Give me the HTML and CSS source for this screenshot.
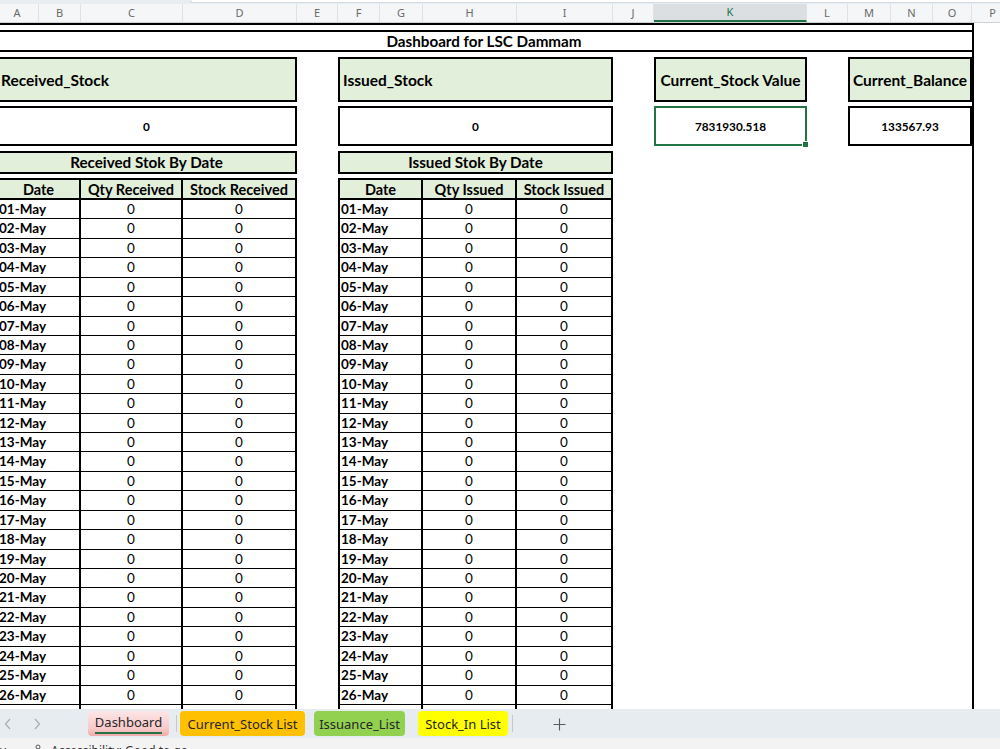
FILE: index.html
```html
<!DOCTYPE html>
<html lang="en">

<head>
  <meta charset="UTF-8">
  <title>Dashboard for LSC Dammam</title>
  <link rel="stylesheet" href="styles.css">
</head>

<body>
  <div class="app">
    <div class="formula-strip">
      <div class="formula-box"></div>
    </div>

    <div class="col-heads">
      <span>A</span><span>B</span><span>C</span><span>D</span><span>E</span>
      <span>F</span><span>G</span><span>H</span><span>I</span><span>J</span>
      <span class="sel">K</span><span>L</span><span>M</span><span>N</span><span>O</span>
      <span>P</span>
    </div>

    <div class="sheet-wrap">
      <div class="sheet">
        <div class="band">
          <div class="title">Dashboard for LSC Dammam</div>
        </div>

        <div class="band band-cards">
          <div class="card left col-recv">Received_Stock</div>
          <div class="card left col-issued">Issued_Stock</div>
          <div class="card center col-k">Current_Stock Value</div>
          <div class="card center col-bal">Current_Balance</div>
        </div>

        <div class="band band-values">
          <div class="value col-recv">0</div>
          <div class="value col-issued">0</div>
          <div class="value sel col-k">7831930.518</div>
          <div class="value col-bal">133567.93</div>
        </div>

        <div class="band band-sub">
          <div class="subhead col-recv">Received Stok By Date</div>
          <div class="subhead col-issued">Issued Stok By Date</div>
        </div>

        <div class="band band-tables">
          <div class="tbl tbl-recv col-recv" id="recvTable">
            <div class="th">Date</div>
            <div class="th">Qty Received</div>
            <div class="th">Stock Received</div>
          </div>
          <div class="tbl tbl-issued col-issued" id="issuedTable">
            <div class="th">Date</div>
            <div class="th">Qty Issued</div>
            <div class="th">Stock Issued</div>
          </div>
        </div>
      </div>
    </div>

    <div class="tabbar">
      <div class="tab-nav">
        <svg width="8" height="12" viewBox="0 0 8 12"><polyline points="6,1 1.5,6 6,11" fill="none" stroke="#a8adb1" stroke-width="1.2"/></svg>
        <svg width="8" height="12" viewBox="0 0 8 12"><polyline points="2,1 6.5,6 2,11" fill="none" stroke="#a8adb1" stroke-width="1.2"/></svg>
      </div>
      <div class="tab tab-active"><span>Dashboard</span></div>
      <div class="tab-sep"></div>
      <div class="tab tab-orange">Current_Stock List</div>
      <div class="tab tab-green">Issuance_List</div>
      <div class="tab tab-yellow">Stock_In List</div>
      <div class="tab-sep sep-end"></div>
      <div class="tab-add">
        <svg width="13" height="13" viewBox="0 0 13 13"><path d="M6.5 0.5v12M0.5 6.5h12" stroke="#5a5a5a" stroke-width="1.1"/></svg>
      </div>
    </div>

    <div class="statusbar">
      <span class="status-ready">ady</span>
      <svg class="status-icon" width="12" height="12" viewBox="0 0 12 12"><circle cx="6" cy="3" r="2" fill="none" stroke="#555" stroke-width="1"/><path d="M1 6h10M6 5v7" stroke="#555" stroke-width="1"/></svg>
      <span>Accessibility: Good to go</span>
    </div>
  </div>

  <script>
    // 26 visible days, then the top edge of the next row under the tab bar
    function fillRows(id) {
      const table = document.getElementById(id);
      for (let d = 1; d <= 26; d++) {
        const label = (d < 10 ? '0' + d : d) + '-May';
        table.insertAdjacentHTML('beforeend',
          '<div class="td date">' + label + '</div>' +
          '<div class="td num">0</div>' +
          '<div class="td num">0</div>');
      }
      table.insertAdjacentHTML('beforeend',
        '<div class="td"></div><div class="td"></div><div class="td"></div>');
    }
    fillRows('recvTable');
    fillRows('issuedTable');
  </script>
</body>

</html>
```

FILE: styles.css
```css
* {
  margin: 0;
  padding: 0;
  box-sizing: border-box;
}

:root {
  --cols: 43px 42px 102px 114px 41px 42px 43px 94px 96px 41px 153px 41px 43px 42px 39px;
  --green-fill: #e2efda;
  --excel-green: #217346;
}

html,
body {
  width: 1000px;
  height: 749px;
  overflow: hidden;
  background: #fff;
}

body {
  font-family: Lato, "Open Sans", sans-serif;
  color: #000;
}

.app {
  display: flex;
  flex-direction: column;
  height: 749px;
}

/* formula bar remnant */
.formula-strip {
  height: 4px;
  background: #e8edf1;
  padding-left: 190px;
}

.formula-box {
  height: 3px;
  background: #fff;
  border: 1px solid #d6dbdf;
  border-top: none;
  border-right: none;
  border-bottom-left-radius: 4px;
}

/* column letters */
.col-heads {
  display: grid;
  grid-template-columns: var(--cols) 42px;
  height: 19px;
  margin-left: -4px;
  background: #f4f6f8;
  border-bottom: 1px solid #cfd3d6;
  font-family: "Noto Sans", sans-serif;
  font-size: 11px;
  color: #6a6a6a;
}

.col-heads span {
  text-align: center;
  line-height: 18px;
  border-right: 1px solid #dfe2e5;
}

.col-heads .sel {
  background: #dcdfe2;
  color: #1e7145;
  border-bottom: 2px solid #1e7145;
  line-height: 16px;
}

/* sheet */
.sheet-wrap {
  flex: 1;
  overflow: hidden;
}

.sheet {
  width: 978px;
  height: 100%;
  margin-left: -4px;
  padding-top: 5px;
  border-top: 2px solid #000;
  border-right: 2px solid #000;
}

.band {
  display: grid;
  grid-template-columns: var(--cols);
}

.col-recv {
  grid-column: 1 / 5;
}

.col-issued {
  grid-column: 6 / 10;
}

.col-k {
  grid-column: 11 / 12;
}

.col-bal {
  grid-column: 13 / 16;
}

.title {
  grid-column: 1 / -1;
  height: 22px;
  border-top: 2px solid #000;
  border-bottom: 2px solid #000;
  text-align: center;
  font-weight: 700;
  font-size: 15.2px;
  line-height: 18px;
}

.band-cards {
  margin-top: 5px;
}

.card {
  height: 45px;
  border: 2px solid #000;
  background: var(--green-fill);
  font-weight: 700;
  font-size: 15.5px;
  display: flex;
  align-items: center;
}

.card.left {
  padding-left: 3px;
}

.card.center {
  justify-content: center;
}

.band-values {
  margin-top: 4px;
}

.value {
  position: relative;
  height: 40px;
  border: 2px solid #000;
  display: flex;
  align-items: center;
  justify-content: center;
  font-weight: 700;
  font-size: 11.8px;
}

.value.sel {
  border-color: var(--excel-green);
}

.value.sel::after {
  content: "";
  position: absolute;
  right: -4px;
  bottom: -4px;
  width: 5px;
  height: 5px;
  background: var(--excel-green);
  border: 1px solid #fff;
}

.band-sub {
  margin-top: 5px;
}

.subhead {
  height: 23px;
  border: 2px solid #000;
  background: var(--green-fill);
  text-align: center;
  font-weight: 700;
  font-size: 15.2px;
  line-height: 19px;
}

.band-tables {
  margin-top: 4px;
  align-items: start;
}

.tbl {
  display: grid;
  border-top: 2px solid #000;
  border-left: 2px solid #000;
}

.tbl-recv {
  grid-template-columns: 83px 102px 114px;
}

.tbl-issued {
  grid-template-columns: 83px 94px 96px;
}

.th {
  height: 20px;
  background: var(--green-fill);
  border-right: 2px solid #000;
  border-bottom: 2px solid #000;
  text-align: center;
  font-weight: 700;
  font-size: 14.5px;
  line-height: 19px;
}

.td {
  height: 19.43px;
  border-right: 2px solid #000;
  border-bottom: 1px solid #000;
  font-size: 13.5px;
  line-height: 19px;
}

.td.date {
  font-weight: 700;
  padding-left: 1px;
}

.td.num {
  text-align: center;
}

/* sheet tabs */
.tabbar {
  height: 29px;
  flex-shrink: 0;
  background: #e6ecef;
  display: flex;
  align-items: center;
  font-family: "Noto Sans", sans-serif;
  font-size: 13px;
  color: #262626;
}

.tab-nav {
  width: 88px;
  display: flex;
  gap: 21px;
  padding-left: 4px;
  padding-top: 1px;
}

.tab {
  height: 25px;
  border-radius: 4px;
  display: flex;
  align-items: center;
  justify-content: center;
  white-space: nowrap;
}

.tab-active {
  width: 81px;
  align-self: flex-end;
  margin-bottom: 2px;
  background: linear-gradient(to bottom, #fde6e6, #f8c9c9 70%, #f3a9a9);
  border-radius: 5px 5px 4px 4px;
}

.tab-active span {
  padding-bottom: 2px;
  border-bottom: 2px solid var(--excel-green);
  line-height: 16px;
}

.tab-sep {
  width: 1px;
  height: 17px;
  background: #c3c8cc;
  margin: 0 3px 0 7px;
}

.tab-orange {
  width: 125px;
  background: #ffc000;
}

.tab-green {
  width: 91px;
  margin-left: 9px;
  background: #92d050;
}

.tab-yellow {
  width: 90px;
  margin-left: 13px;
  background: #ffff00;
}

.sep-end {
  margin: 0 0 0 4px;
}

.tab-add {
  margin-left: 40px;
  display: flex;
  padding-top: 1px;
}

/* status bar */
.statusbar {
  height: 11px;
  flex-shrink: 0;
  background: #f3f3f3;
  display: flex;
  align-items: flex-start;
  padding-top: 6px;
  overflow: hidden;
  font-family: "Noto Sans", sans-serif;
  font-size: 12px;
  line-height: 14px;
  color: #333;
}

.status-ready {
  margin-left: -14px;
  width: 46px;
}

.status-icon {
  margin-top: 0;
  margin-right: 7px;
}
```
